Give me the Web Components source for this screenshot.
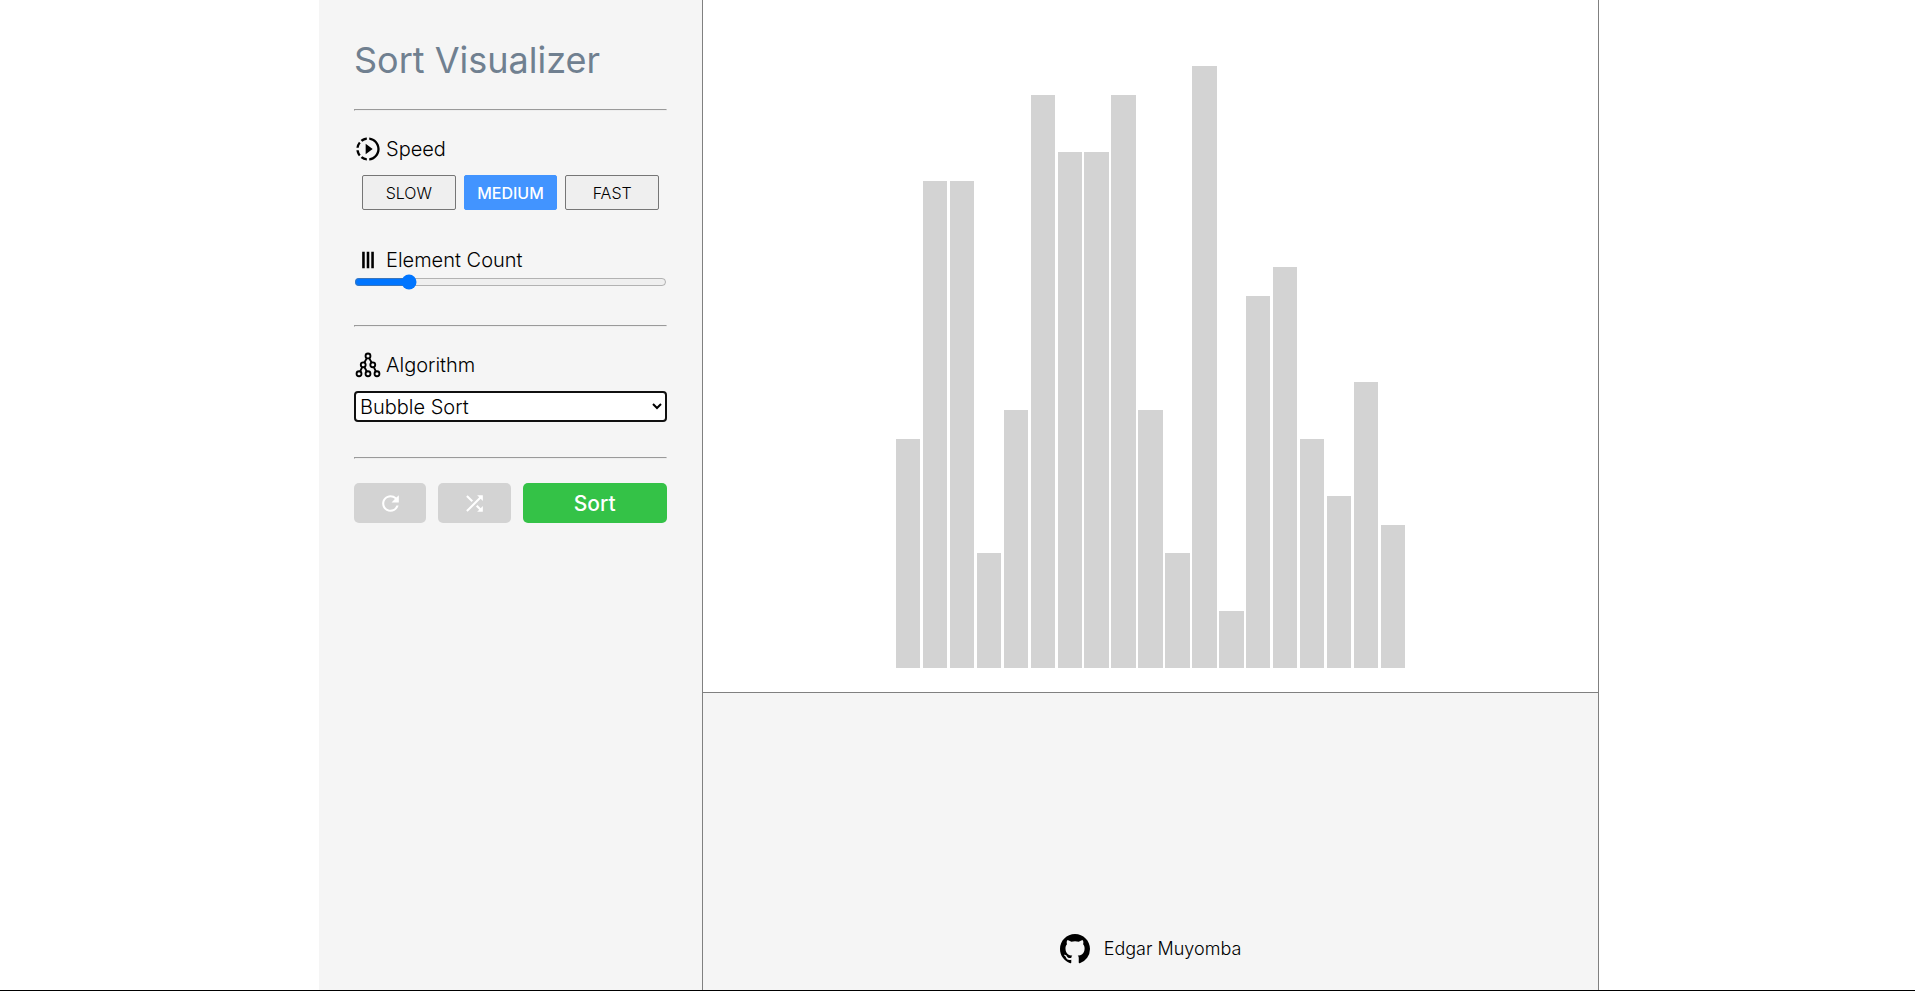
<!DOCTYPE html>
<html lang="en">
<head>
<meta charset="utf-8">
<title>Sort Visualizer</title>
<style>
  body { margin: 0; background: #fff; color: #000; font-family: Inter, "Open Sans", sans-serif; font-weight: 300; font-size: 20px; }
</style>
</head>
<body>
<sort-app></sort-app>
<script>
const ICONS = {
  speed: '<path d="M10 7.5v9l6-4.500zM11 4.070V2.050c-2.010.2-3.840 1-5.320 2.210L7.100 5.690A7.941 7.941 0 0111 4.070zM5.690 7.100L4.260 5.680A9.949 9.949 0 002.050 11h2.020c.18-1.460.76-2.790 1.620-3.900zM4.070 13H2.050c.2 2.010 1 3.840 2.210 5.320l1.430-1.430A7.868 7.868 0 014.070 13zm1.610 6.740A9.981 9.981 0 0011 21.950v-2.020a7.941 7.941 0 01-3.900-1.620l-1.420 1.430zM22 12c0 5.160-3.920 9.420-8.950 9.950v-2.020C16.970 19.410 20 16.050 20 12s-3.030-7.410-6.950-7.930V2.050C18.080 2.580 22 6.840 22 12z"/>',
  columns: '<path d="M7 5h2.200v14H7zM10.900 5h2.200v14h-2.200zM14.800 5H17v14h-2.200z"/>',
  tree: '<g fill="none" stroke="currentColor" stroke-width="1.600"><circle cx="12" cy="4.200" r="2.100"/><circle cx="7.900" cy="11.800" r="2.100"/><circle cx="16.100" cy="11.800" r="2.100"/><circle cx="4.300" cy="19.500" r="2.100"/><circle cx="12" cy="19.500" r="2.100"/><circle cx="19.700" cy="19.500" r="2.100"/><path d="M11 6.100l-2.100 3.800M13 6.100l2.100 3.800M7 13.800l-1.800 3.800M8.900 13.700l2.100 3.900M17 13.800l1.800 3.800"/></g>',
  refresh: '<path d="M17.650 6.350A7.958 7.958 0 0012 4c-4.420 0-7.990 3.580-7.990 8s3.570 8 7.990 8c3.730 0 6.840-2.550 7.730-6h-2.080A5.990 5.990 0 0112 18c-3.310 0-6-2.690-6-6s2.690-6 6-6c1.660 0 3.140.69 4.220 1.780L13 11h7V4l-2.350 2.350z"/>',
  shuffle: '<path d="M10.590 9.170L5.410 4 4 5.410l5.170 5.170 1.420-1.410zM14.500 4l2.040 2.040L4 18.590 5.410 20 17.960 7.460 20 9.500V4h-5.500zm.33 9.410l-1.410 1.410 3.130 3.130L14.500 20H20v-5.500l-2.040 2.040-3.130-3.130z"/>',
  github: '<path transform="scale(1.500)" d="M8 0C3.580 0 0 3.580 0 8c0 3.540 2.290 6.530 5.470 7.590.4.070.55-.17.55-.38 0-.19-.01-.82-.01-1.490-2.010.37-2.530-.49-2.690-.94-.09-.23-.48-.94-.82-1.130-.28-.15-.68-.52-.01-.53.63-.01 1.080.58 1.230.82.72 1.210 1.870.87 2.330.66.07-.52.28-.87.51-1.070-1.780-.2-3.640-.89-3.640-3.950 0-.87.31-1.590.82-2.150-.08-.2-.36-1.020.08-2.120 0 0 .67-.21 2.200.82.64-.18 1.320-.27 2-.27s1.360.09 2 .27c1.530-1.040 2.200-.82 2.200-.82.44 1.100.16 1.920.08 2.120.51.56.82 1.270.82 2.150 0 3.070-1.870 3.750-3.650 3.950.29.25.54.73.54 1.480 0 1.070-.01 1.930-.01 2.200 0 .21.15.46.55.38A8.013 8.013 0 0016 8c0-4.420-3.580-8-8-8z"/>'
};

class AppIcon extends HTMLElement {
  connectedCallback() {
    this.attachShadow({ mode: 'open' }).innerHTML = `
      <style>
        :host { display: block; flex: none; width: 28px; height: 28px; }
        svg { display: block; width: 100%; height: 100%; fill: currentColor; }
      </style>
      <svg viewBox="0 0 24 24" aria-hidden="true">${ICONS[this.getAttribute('name')]}</svg>`;
  }
}
customElements.define('app-icon', AppIcon);

class FieldTitle extends HTMLElement {
  connectedCallback() {
    this.attachShadow({ mode: 'open' }).innerHTML = `
      <style>
        :host { display: flex; align-items: center; gap: 4px; height: 28px; line-height: 28px; }
      </style>
      <app-icon name="${this.getAttribute('icon')}"></app-icon><slot></slot>`;
  }
}
customElements.define('field-title', FieldTitle);

class SpeedPicker extends HTMLElement {
  connectedCallback() {
    this.attachShadow({ mode: 'open' }).innerHTML = `
      <style>
        :host { display: grid; grid-template-columns: repeat(3, 1fr); gap: 8px; padding: 0 8px; }
        button { height: 35px; padding: 0; border: 1px solid #767676; border-radius: 2px; background: #efefef; color: #000; font: inherit; font-size: 16px; }
        button[aria-pressed=true] { border-color: #4294ff; background: #4294ff; color: #fff; font-weight: 500; }
      </style>
      <button type="button" aria-pressed="false">SLOW</button>
      <button type="button" aria-pressed="true">MEDIUM</button>
      <button type="button" aria-pressed="false">FAST</button>`;
    const buttons = this.shadowRoot.querySelectorAll('button');
    buttons.forEach(b => b.addEventListener('click', () =>
      buttons.forEach(o => o.setAttribute('aria-pressed', String(o === b)))));
  }
}
customElements.define('speed-picker', SpeedPicker);

class SortActions extends HTMLElement {
  connectedCallback() {
    this.attachShadow({ mode: 'open' }).innerHTML = `
      <style>
        :host { display: grid; grid-template-columns: 1fr 1fr 2fr; gap: 12px; }
        button { display: flex; align-items: center; justify-content: center; height: 40px; padding: 0; border: 0; border-radius: 5px; background: #d3d3d3; color: #fff; font: inherit; font-size: 21px; font-weight: 500; }
        .go { background: #34c247; }
        app-icon { width: 25px; height: 25px; }
      </style>
      <button type="button" aria-label="Reset"><app-icon name="refresh"></app-icon></button>
      <button type="button" aria-label="Shuffle"><app-icon name="shuffle"></app-icon></button>
      <button type="button" class="go">Sort</button>`;
  }
}
customElements.define('sort-actions', SortActions);

class ControlPanel extends HTMLElement {
  connectedCallback() {
    this.attachShadow({ mode: 'open' }).innerHTML = `
      <style>
        :host { display: block; box-sizing: border-box; padding: 35px; background: #f5f5f5; border-right: 1px solid gray; }
        h1 { margin: 0 0 24px; color: #708090; font-size: 36px; line-height: 50px; font-weight: 400; }
        hr { margin: 0 0 24px; }
        section { margin-bottom: 35px; }
        section:first-of-type { margin-bottom: 36px; }
        label { display: block; }
        speed-picker { margin-top: 12px; }
        input { display: block; box-sizing: border-box; width: 100%; height: 16px; margin: 0; accent-color: #0075ff; }
        select { display: block; box-sizing: border-box; width: 100%; height: 31px; margin-top: 12px; padding: 0; border: 2px solid #101010; border-radius: 4px; background: #fff; color: #000; font: inherit; }
      </style>
      <h1>Sort Visualizer</h1>
      <hr>
      <section>
        <field-title icon="speed">Speed</field-title>
        <speed-picker></speed-picker>
      </section>
      <section>
        <label for="count"><field-title icon="columns">Element Count</field-title></label>
        <input id="count" type="range" min="5" max="100" value="20">
      </section>
      <hr>
      <section>
        <label for="algorithm"><field-title icon="tree">Algorithm</field-title></label>
        <select id="algorithm"><option>Bubble Sort</option><option>Selection Sort</option><option>Insertion Sort</option><option>Merge Sort</option><option>Quick Sort</option></select>
      </section>
      <hr>
      <sort-actions></sort-actions>`;
  }
}
customElements.define('control-panel', ControlPanel);

class BarChart extends HTMLElement {
  connectedCallback() {
    const values = this.getAttribute('values').split(' ');
    this.attachShadow({ mode: 'open' }).innerHTML = `
      <style>
        :host { display: flex; justify-content: center; box-sizing: border-box; padding-bottom: 24px; background: #fff; border-bottom: 1px solid gray; }
        .bars { display: flex; align-items: flex-end; gap: 0.5%; width: 56.9%; }
        .bars div { flex: 1; height: calc(var(--v) * 4.289%); background: #d3d3d3; }
      </style>
      <div class="bars">${values.map(v => `<div style="--v:${v}"></div>`).join('')}</div>`;
  }
}
customElements.define('bar-chart', BarChart);

class AuthorCredit extends HTMLElement {
  connectedCallback() {
    this.attachShadow({ mode: 'open' }).innerHTML = `
      <style>
        :host { display: flex; align-items: flex-end; justify-content: center; padding-bottom: 26px; background: #f5f5f5; }
        a { display: flex; align-items: center; gap: 14px; color: inherit; text-decoration: none; font-size: 18px; line-height: 24px; }
        app-icon { width: 30px; height: 30px; }
      </style>
      <a href="#"><app-icon name="github"></app-icon><slot></slot></a>`;
  }
}
customElements.define('author-credit', AuthorCredit);

class SortApp extends HTMLElement {
  connectedCallback() {
    this.attachShadow({ mode: 'open' }).innerHTML = `
      <style>
        :host { display: grid; grid-template-columns: 319fr 384fr 896fr 316fr; box-sizing: border-box; min-height: 100vh; border-bottom: 1px solid #000; }
        control-panel { grid-column: 2; }
        main { grid-column: 3; display: grid; grid-template-rows: 7fr 3fr; border-right: 1px solid gray; }
      </style>
      <control-panel></control-panel>
      <main>
        <bar-chart values="8 17 17 4 9 20 18 18 20 9 4 21 2 13 14 8 6 10 5"></bar-chart>
        <author-credit>Edgar Muyomba</author-credit>
      </main>`;
  }
}
customElements.define('sort-app', SortApp);
</script>
</body>
</html>
